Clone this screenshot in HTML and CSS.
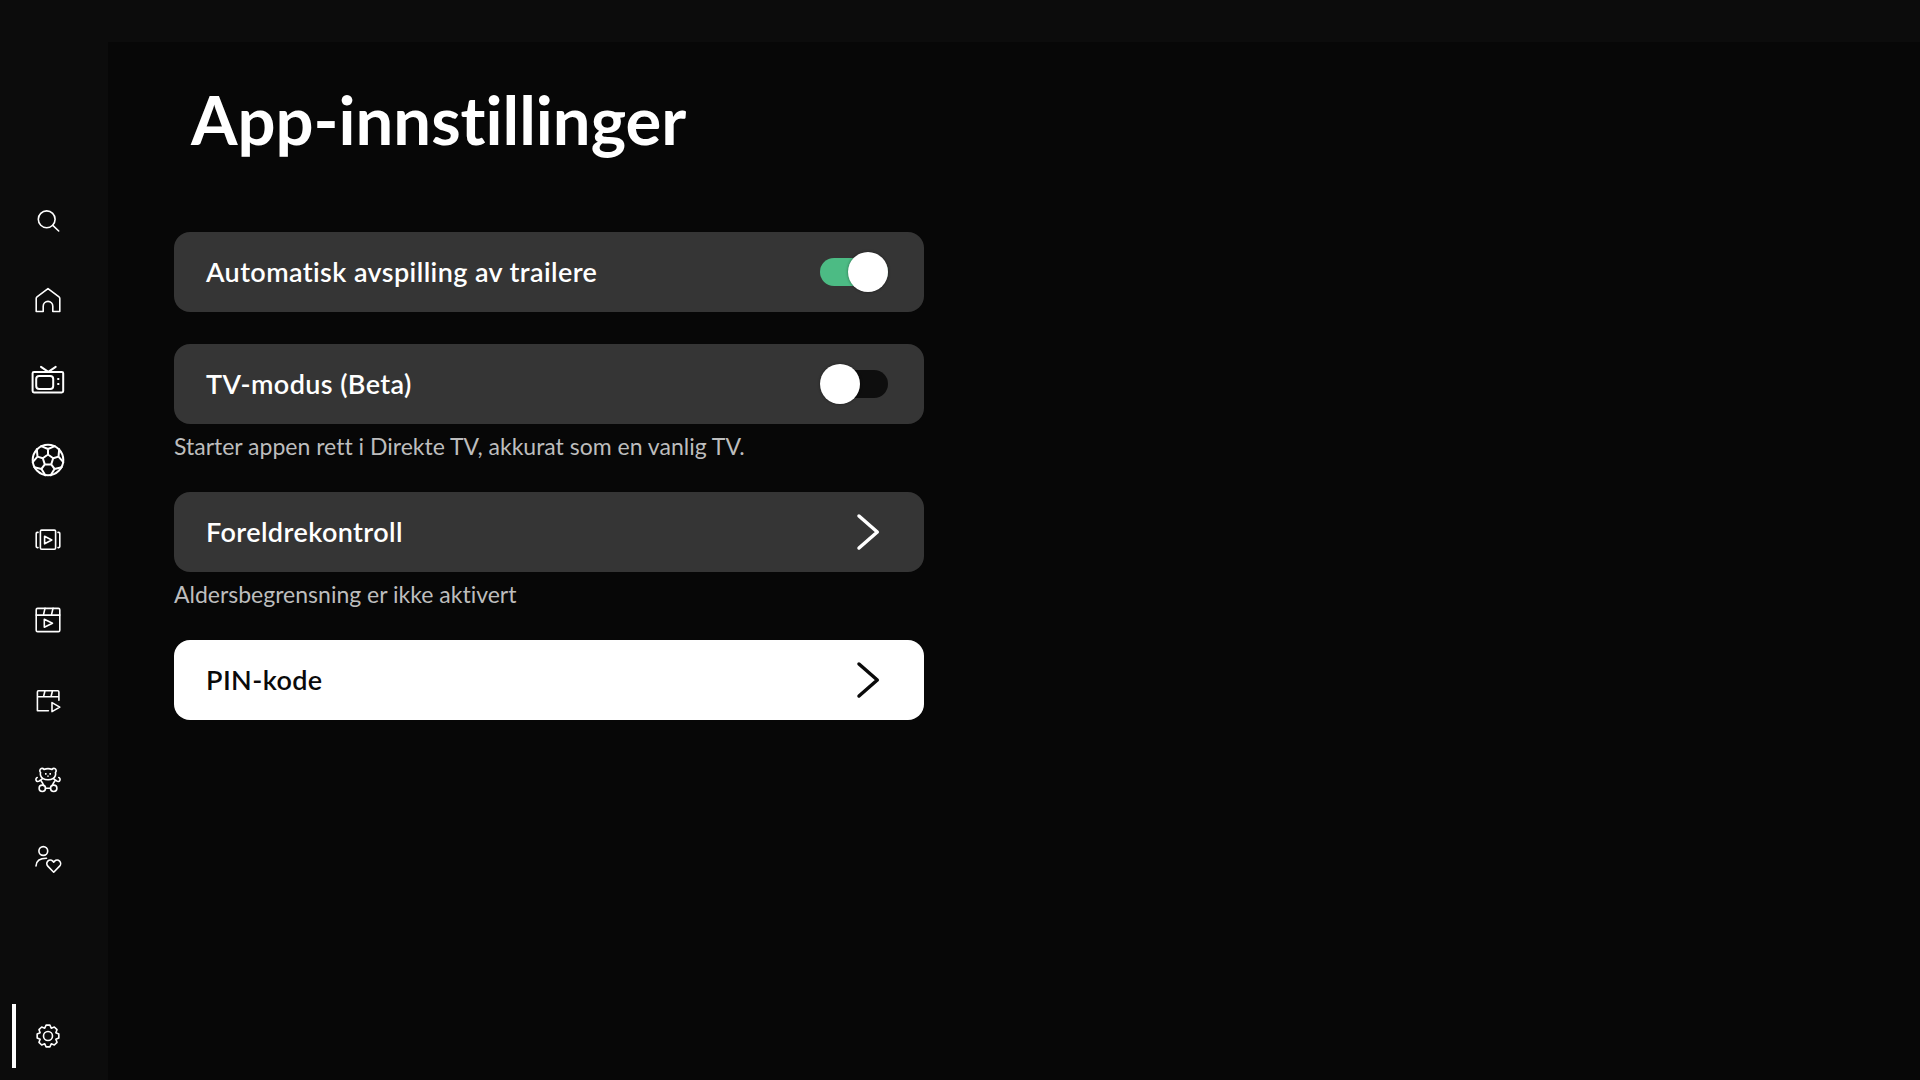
FILE: index.html
```html
<!DOCTYPE html>
<html lang="no">
<head>
<meta charset="utf-8">
<title>App-innstillinger</title>
<link rel="stylesheet" href="styles.css">
</head>
<body>
<div class="app">
  <nav class="sidebar">
    <div class="nav-list">
      <div class="nav-item"><svg class="icon" viewBox="0 0 40 40"><circle cx="18.7" cy="19.3" r="8.4"/><path d="M24.800 25.400l5.900 5.600"/></svg></div>
      <div class="nav-item"><svg class="icon" viewBox="0 0 40 40"><path d="M8.2 18.4Q8.2 17.4 9 16.8L20 8.6l11 8.2q.8.6.8 1.6v13.1H24.8V26.2a4.8 4.8 0 0 0-9.6 0v5.3H8.2z"/></svg></div>
      <div class="nav-item"><svg class="icon icon-bold" viewBox="0 0 40 40"><rect x="4.6" y="11.9" width="30.6" height="20.6" rx="1.4"/><rect x="8.2" y="15.9" width="17" height="13" rx="3"/><path d="M13 6.8l7.3 5 7.4-5"/><path class="fill" d="M29.3 18h2v2h-2zM29.3 23h2v2h-2z"/></svg></div>
      <div class="nav-item"><svg class="icon icon-bold" viewBox="0 0 40 40"><circle cx="20" cy="20" r="15.3"/><path d="M20 14.500l5.200 3.800-2 6.100h-6.400l-2-6.100zM20 14.500V9M25.200 18.300l5.300-1.700M23.200 24.400l3.300 4.500M16.800 24.400l-3.300 4.500M14.800 18.300l-5.300-1.700M13.200 6.100L20 9l6.800-2.900M31.200 9.200l-.7 7.400 4.800 5.600M33.700 27.300l-7.200 1.600-3.800 6.400M17.300 35.300l-3.800-6.400-7.200-1.600M4.700 22.200l4.800-5.600-.7-7.400"/></svg></div>
      <div class="nav-item"><svg class="icon" viewBox="0 0 40 40"><rect x="12.4" y="10.1" width="15.2" height="19.2" rx="1.2"/><path d="M10 12.4H9.2Q8.2 12.4 8.2 13.4v13.2q0 1 1 1h.8M30 12.4h.8q1 0 1 1v13.2q0 1-1 1H30M16.6 16.2l7.2 3.8-7.2 3.8z"/></svg></div>
      <div class="nav-item"><svg class="icon" viewBox="0 0 40 40"><rect x="8.2" y="8.4" width="23.6" height="23.2" rx="1.4"/><path d="M8.2 15.1h23.6M17 8.4l-1.600 6.700M25 8.400l-1.600 6.700M16.300 19.200l8.200 4-8.200 4z"/></svg></div>
      <div class="nav-item"><svg class="icon" viewBox="0 0 40 40"><path d="M9.4 16.7V11.900q0-1.100 1.100-1.100h19.300q1.100 0 1.100 1.100v4.800zM9.400 16.700v14h11M30.900 17v3.200M17 10.800l-1.500 5.900M24.500 10.800l-1.500 5.900M24 22.600l7.800 4.500-7.800 4.500z"/></svg></div>
      <div class="nav-item"><svg class="icon" viewBox="0 0 40 40"><path d="M13.300 8.600a2.400 2.400 0 0 0-.7 4q-.5 1.400 0 3c.8 2.600 4 4.200 7.400 4.200s6.600-1.600 7.400-4.200q.5-1.600 0-3a2.400 2.400 0 0 0-.7-4c-1-.4-2 0-2.700.8q-2-.8-4-.8t-4 .8c-.7-.8-1.700-1.200-2.700-.8zM14 19.200l-2.800 1.800a2 2 0 1 1-2-3.400M26 19.200l2.800 1.800a2 2 0 1 0 2-3.400M13.200 21q1.800 2.500 2.400 4.400M26.800 21q-1.800 2.500-2.400 4.400M17.500 28.300h5"/><circle cx="14.300" cy="28.300" r="3.200"/><circle cx="25.700" cy="28.300" r="3.200"/><path class="fill" d="M17 13h1.600v1.800H17zM21.400 13H23v1.800h-1.600zM19.200 15.600h1.600v1.200H19.200z"/></svg></div>
      <div class="nav-item"><svg class="icon" viewBox="0 0 40 40"><circle cx="15.300" cy="11" r="4.400"/><path d="M8 26q.3-7.700 10.500-7.700"/><path d="M25.700 32.200l-5.900-6.100a3.500 3.500 0 0 1 5-5l.9 1 .9-1a3.500 3.500 0 0 1 5 5z"/></svg></div>
    </div>
    <div class="nav-item nav-item-active"><svg class="icon" viewBox="0 0 40 40"><path d="M18.090 9.170L21.910 9.170 23.250 12.150 26.310 10.990 29.010 13.690 27.850 16.750 30.830 18.090 30.830 21.910 27.850 23.250 29.010 26.310 26.310 29.010 23.250 27.850 21.910 30.830 18.090 30.830 16.750 27.850 13.690 29.010 10.990 26.310 12.150 23.250 9.170 21.910 9.170 18.090 12.150 16.750 10.990 13.690 13.690 10.990 16.750 12.150z"/><circle cx="20" cy="20" r="4.500"/></svg></div>
  </nav>
  <main class="main">
    <h1 class="title">App-innstillinger</h1>
    <section class="settings">
      <div class="group">
        <div class="row"><span class="label">Automatisk avspilling av trailere</span><span class="toggle toggle-on"><span class="knob"></span></span></div>
      </div>
      <div class="group">
        <div class="row"><span class="label">TV-modus (Beta)</span><span class="toggle"><span class="knob"></span></span></div>
        <p class="hint">Starter appen rett i Direkte TV, akkurat som en vanlig TV.</p>
      </div>
      <div class="group">
        <div class="row"><span class="label">Foreldrekontroll</span><svg class="chevron" viewBox="0 0 68 40"><path d="M39 4l18.300 16L39 36"/></svg></div>
        <p class="hint">Aldersbegrensning er ikke aktivert</p>
      </div>
      <div class="group">
        <div class="row row-focus"><span class="label">PIN-kode</span><svg class="chevron" viewBox="0 0 68 40"><path d="M39 4l18.300 16L39 36"/></svg></div>
      </div>
    </section>
  </main>
</div>
</body>
</html>
```
FILE: styles.css
```css
* { box-sizing: border-box; }
html, body { margin: 0; height: 100%; }
body {
  background: #0c0c0c;
  color: #fff;
  font-family: "Lato", "Open Sans", sans-serif;
  font-variant-ligatures: none;
  overflow: hidden;
}
.app { display: flex; height: 1080px; }
.sidebar {
  width: 108px;
  flex: none;
  display: flex;
  flex-direction: column;
  justify-content: space-between;
  padding: 180px 0 12px;
}
.nav-list { display: flex; flex-direction: column; }
.nav-item {
  width: 96px;
  height: 80px;
  display: flex;
  align-items: center;
  justify-content: center;
}
.nav-item-active { height: 64px; position: relative; }
.nav-item-active::before {
  content: "";
  position: absolute;
  left: 12px;
  top: 0;
  bottom: 0;
  width: 4px;
  background: #fff;
}
.icon {
  width: 40px;
  height: 40px;
  fill: none;
  stroke: #fff;
  stroke-width: 1.6;
  stroke-linejoin: round;
  stroke-linecap: round;
}
.icon-bold { stroke-width: 2; }
.icon .fill { fill: #fff; stroke: none; }
.main {
  flex: 1;
  margin-top: 42px;
  background: #070707;
  padding: 0 0 0 66px;
}
.title {
  margin: 0 0 0 17px;
  height: 190px;
  padding-top: 37px;
  font-size: 67px;
  line-height: 80px;
  font-weight: 700;
}
.settings { width: 750px; display: flex; flex-direction: column; gap: 32px; }
.group { display: flex; flex-direction: column; }
.row {
  height: 80px;
  background: #353535;
  border-radius: 16px;
  padding: 0 36px 0 32px;
  display: flex;
  align-items: center;
  justify-content: space-between;
}
.row-focus { background: #fff; color: #0a0a0a; }
.label {
  font-size: 27px;
  font-weight: 600;
  line-height: 32px;
  letter-spacing: 0.4px;
  margin-top: -1px;
}
.hint {
  margin: 0;
  padding-top: 4px;
  height: 36px;
  line-height: 36px;
  font-size: 23px;
  color: #bdbdbd;
}
.toggle {
  position: relative;
  width: 68px;
  height: 28px;
  border-radius: 14px;
  background: #0e0e0e;
}
.toggle-on { background: #4cbb84; }
.knob {
  position: absolute;
  top: -6px;
  left: 0;
  width: 40px;
  height: 40px;
  border-radius: 50%;
  background: #fff;
  box-shadow: 0 0 3px rgba(0,0,0,.45);
}
.toggle-on .knob { left: 28px; }
.chevron {
  width: 68px;
  height: 40px;
  fill: none;
  stroke: currentColor;
  stroke-width: 3.500;
  stroke-linecap: round;
  stroke-linejoin: round;
}
```
